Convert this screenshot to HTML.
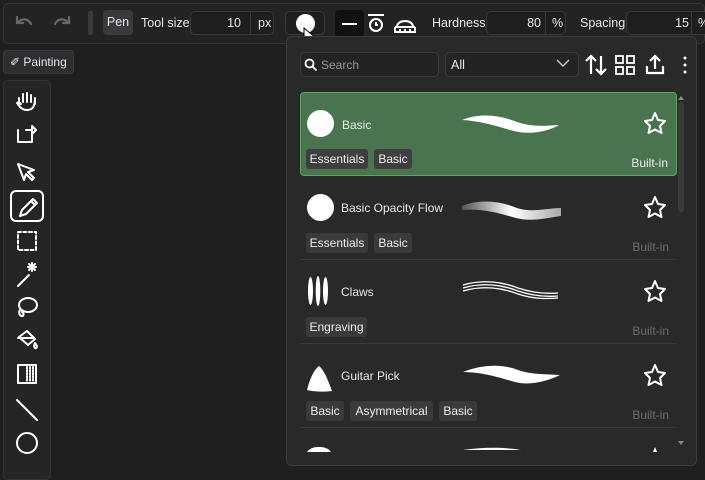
<!DOCTYPE html><html><head><style>
*{box-sizing:border-box;margin:0;padding:0}
body{width:705px;height:467px;background:#1f1f1f;font-family:"Liberation Sans",sans-serif;color:#e8e8e8;font-size:12.5px;position:relative;overflow:hidden}
.a{position:absolute}
.box{position:absolute;border:1px solid #3a3a3a;border-radius:5px;background:#1e1e1e}
.tag{position:absolute;background:#3a3a3b;border-radius:3px;font-size:12px;height:20px;line-height:20px;text-align:center;color:#eee}
.row{position:absolute;left:300px;width:377px;height:84px;border-bottom:1px solid #3a3a3a}
.nm{position:absolute;left:41px;font-size:12px}
.bi{position:absolute;right:8px;font-size:12px;color:#6e6e6e}
svg{position:absolute}
</style></head><body>
<div class="a" style="left:3px;top:3px;width:702px;height:41px;background:#232324;border:1px solid #343434;border-radius:5px"></div>
<svg style="left:14px;top:13px" width="60" height="20" fill="none" stroke="#666" stroke-width="2.2" stroke-linecap="round"><path d="M3 4v6h6M4 10c3-5 10-5 13 1"/><path d="M55 4v6h-6M54 10c-3-5-10-5-13 1"/></svg>
<div class="a" style="left:88px;top:11px;width:5px;height:24px;background:#3a3a3a;border-radius:2px"></div>
<div class="a" style="left:103px;top:10px;width:30px;height:25px;background:#3a3a3c;border-radius:4px;text-align:center;line-height:25px">Pen</div>
<div class="a" style="left:141px;top:16px">Tool size</div>
<div class="box" style="left:190px;top:11px;width:84px;height:24px"><span class="a" style="left:34px;top:4px;width:16px;text-align:right">10</span><span class="a" style="left:59px;top:0;height:22px;border-left:1px solid #3a3a3a;padding:4px 7px">px</span></div>
<div class="box" style="left:285px;top:11px;width:40px;height:24px"><div class="a" style="left:10px;top:2px;width:19px;height:19px;border-radius:50%;background:#fff"></div></div>
<svg style="left:302px;top:27px" width="16" height="22"><path d="M2 1v15l4-4 3 7 3-1-3-7h5z" fill="#fff" stroke="#000"/></svg>
<div class="a" style="left:335px;top:10px;width:29px;height:27px;background:#111;border-radius:4px"><div class="a" style="left:7px;top:13px;width:15px;height:2px;background:#fff"></div></div>
<svg style="left:366px;top:13px" width="56" height="22" fill="none" stroke="#fff" stroke-width="2"><path d="M2 2h16"/><circle cx="10" cy="12" r="6"/><path d="M10 9v3h2"/><path d="M29 14v5h20v-5M31 14c0-8 16-8 16 0M29 14h20M34 16v2M39 16v2M44 16v2"/></svg>
<div class="a" style="left:432px;top:16px">Hardness</div>
<div class="box" style="left:486px;top:11px;width:80px;height:24px"><span class="a" style="left:22px;top:4px;width:32px;text-align:right">80</span><span class="a" style="left:58px;top:0;height:22px;border-left:1px solid #3a3a3a;padding:4px 6px">%</span></div>
<div class="a" style="left:580px;top:16px">Spacing</div>
<div class="box" style="left:626px;top:11px;width:85px;height:24px"><span class="a" style="left:22px;top:4px;width:40px;text-align:right">15</span><span class="a" style="left:64px;top:0;height:22px;border-left:1px solid #3a3a3a;padding:4px 6px">%</span></div>
<div class="a" style="left:3px;top:50px;width:71px;height:24px;background:#2e2e30;border:1px solid #3a3a3a;border-radius:4px;font-size:12px;line-height:22px;padding-left:6px">✐ Painting</div>
<div class="a" style="left:3px;top:80px;width:48px;height:400px;background:#252526;border:1px solid #333;border-radius:5px"></div>
<div class="a" style="left:10px;top:190px;width:34px;height:32px;border:2px solid #fff;border-radius:6px"></div>
<svg style="left:14px;top:90px" width="28" height="370" fill="none" stroke="#fff" stroke-width="2" stroke-linecap="round" stroke-linejoin="round">
<path d="M5 14V8M9 12V4M13 12V3M17 12V5M21 14V8c0 8-2 12-8 12-5 0-7-3-10-7l2-1 2 2"/>
<path d="M4 40v12h14V44M12 40h6V36l4 4-4 4v-4"/>
<path d="M4 74l16 6-6 2 6 6-2 2-6-6-2 6z"/>
<path d="M6 126l2-6 11-11 4 4-11 11zM17 111l4 4"/>
<rect x="4" y="142" width="18" height="18" stroke-dasharray="3 2.5"/>
<path d="M4 196l11-11M18 173v8M14 177h8M15 174l6 6M21 174l-6 6"/>
<ellipse cx="14" cy="215" rx="9" ry="7"/><path d="M6 220c-2 3 0 6 2 6s2-3 0-4"/>
<path d="M5 247l8-6 8 8-7 6zM4 248h14M21 253c-1 2-1 4 0 5 1 1 2-1 2-2z"/>
<rect x="4" y="275" width="18" height="18"/><path d="M13 277v14M16 277v14M19 277v14" stroke-dasharray="1.5 1.5"/>
<path d="M3 310l20 20"/>
<circle cx="13" cy="353" r="10"/></svg>
<div class="a" style="left:286px;top:36px;width:411px;height:430px;background:#29292a;border:1px solid #3c3c3c;border-radius:6px"></div>
<div class="box" style="left:300px;top:52px;width:139px;height:25px;background:#232324"><span class="a" style="left:20px;top:5px;color:#999;font-size:12px">Search</span></div>
<svg style="left:304px;top:58px" width="14" height="14" fill="none" stroke="#fff" stroke-width="1.8"><circle cx="5.5" cy="5.5" r="4"/><path d="M8.5 8.5l4 4"/></svg>
<div class="box" style="left:445px;top:52px;width:134px;height:25px;background:#232324"><span class="a" style="left:5px;top:5px">All</span></div>
<svg style="left:555px;top:58px" width="16" height="10" fill="none" stroke="#ccc" stroke-width="1.4"><path d="M2 2l6 6 6-6"/></svg>
<svg style="left:585px;top:53px" width="110" height="24" fill="none" stroke="#fff" stroke-width="2.2"><path d="M6 21V3M1 8l5-5 5 5M16 3v18M11 16l5 5 5-5"/><rect x="31" y="3" width="7" height="7" stroke-width="1.8"/><rect x="42" y="3" width="7" height="7" stroke-width="1.8"/><rect x="31" y="14" width="7" height="7" stroke-width="1.8"/><rect x="42" y="14" width="7" height="7" stroke-width="1.8"/><path d="M62 13v7h16v-7M70 16V3M65 8l5-5 5 5"/><circle cx="100" cy="5" r="1.5" fill="#fff" stroke="none"/><circle cx="100" cy="12" r="1.5" fill="#fff" stroke="none"/><circle cx="100" cy="19" r="1.5" fill="#fff" stroke="none"/></svg>
<div class="a" style="left:678px;top:92px;width:6px;height:372px"><div class="a" style="left:0;top:10px;width:6px;height:110px;background:#3a3a3a;border-radius:3px"></div></div>
<div class="row" style="top:92px;height:84px;background:#4a734f;border:1px solid #62a066;border-radius:4px">
<div class="a" style="left:6px;top:17px;width:27px;height:27px;border-radius:50%;background:#fff"></div><div class="nm" style="top:25px">Basic</div>
<div class="tag" style="left:5px;top:56px;width:62px;background:#3f3f40">Essentials</div><div class="tag" style="left:73px;top:56px;width:38px;background:#3f3f40">Basic</div><div class="bi" style="top:63px;color:#f0f0f0">Built-in</div></div>
<div class="row" style="top:176px">
<div class="a" style="left:7px;top:18px;width:27px;height:27px;border-radius:50%;background:#fff"></div><div class="nm" style="top:25px">Basic Opacity Flow</div>
<div class="tag" style="left:6px;top:57px;width:62px">Essentials</div><div class="tag" style="left:74px;top:57px;width:38px">Basic</div><div class="bi" style="top:64px">Built-in</div></div>
<div class="row" style="top:260px">
<div class="nm" style="top:25px">Claws</div>
<div class="tag" style="left:6px;top:57px;width:61px">Engraving</div><div class="bi" style="top:64px">Built-in</div></div>
<div class="row" style="top:344px">
<div class="nm" style="top:25px">Guitar Pick</div>
<div class="tag" style="left:6px;top:57px;width:38px">Basic</div><div class="tag" style="left:50px;top:57px;width:83px">Asymmetrical</div><div class="tag" style="left:139px;top:57px;width:38px">Basic</div><div class="bi" style="top:64px">Built-in</div></div>
<svg style="left:300px;top:92px" width="390" height="375">
<defs><linearGradient id="g"><stop offset="0" stop-color="#fff" stop-opacity=".2"/><stop offset=".5" stop-color="#fff"/><stop offset="1" stop-color="#fff" stop-opacity=".6"/></linearGradient></defs>
<path d="M162 28c20-8 40-4 55 2 15 5 28 4 42 3-12 7-30 10-45 6-15-4-32-10-52-11z" fill="#fff"/>
<path d="M162 114c20-8 40-4 55 2 15 5 30 0 44 0v8c-14 2-30 6-45 2-15-4-32-10-54-8z" fill="url(#g)"/>
<path d="M163 193c20-6 40-3 55 3 15 5 28 6 40 5M163 196c20-6 40-3 55 3 15 5 28 6 40 5M163 199c20-6 40-3 55 3 15 5 28 5 40 4" stroke="#fff" stroke-width="1.3" fill="none"/>
<path d="M163 280c20-8 40-8 55-2 15 5 28 4 42 5-12 6-30 11-45 7-15-4-32-10-52-10z" fill="#fff"/>
<path d="M163 358c20-3 40-3 58 0z" fill="#fff"/>
<ellipse cx="10.5" cy="199" rx="2.5" ry="14" fill="#fff"/><ellipse cx="18" cy="199" rx="2.3" ry="15" fill="#fff"/><ellipse cx="25.5" cy="199" rx="2.5" ry="14" fill="#fff"/>
<path d="M7 298c3-12 7-20 12-24 5 4 9 14 13 25-8 1-17 1-25-1z" fill="#fff"/>
<path d="M7 360c3-4 7-5 12-5s9 1 12 5z" fill="#fff"/>
<g fill="none" stroke="#fff" stroke-width="2" stroke-linejoin="round">
<path id="s" d="M355 21l3 7 7 1-5 5 1.5 7-6.5-3.5-6.5 3.5 1.5-7-5-5 7-1z"/>
<use href="#s" y="84"/><use href="#s" y="168"/><use href="#s" y="252"/></g>
<path d="M355 355l2 5h-4z" fill="#fff"/>
<path d="M378 8l3-4 3 4zM378 349l3 4 3-4z" fill="#888"/>
</svg>
</body></html>
